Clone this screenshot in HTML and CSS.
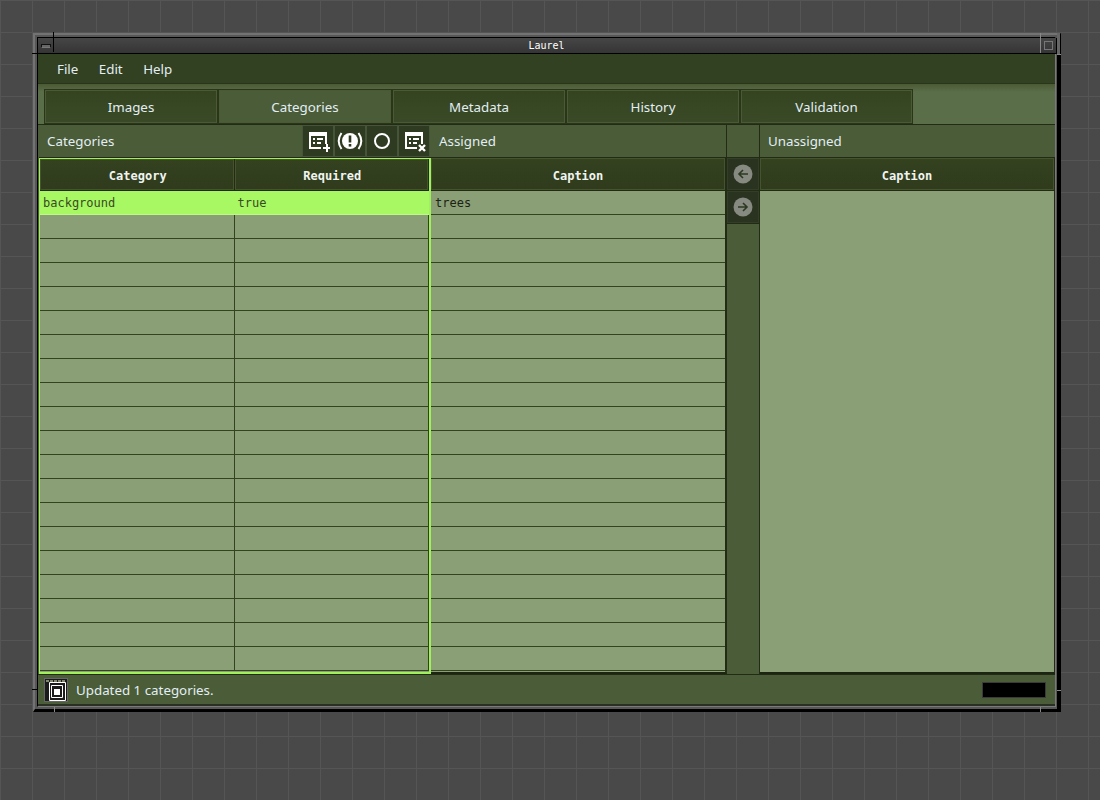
FILE: index.html
```html
<!DOCTYPE html>
<html lang="en">
<head>
    <meta charset="UTF-8">
    <title>Laurel</title>
    <link rel="stylesheet" href="styles.css">
</head>
<body>

<div class="window">
    <div class="frame">
        <div class="titlebar">
            <div class="corner-btn"><span class="minimize"></span></div>
            <div class="title">Laurel</div>
            <div class="corner-btn corner-right"><span class="maximize"></span></div>
        </div>

        <div class="menubar">
            <span>File</span>
            <span>Edit</span>
            <span>Help</span>
        </div>

        <div class="tabs">
            <div class="tab">Images</div>
            <div class="tab active">Categories</div>
            <div class="tab">Metadata</div>
            <div class="tab">History</div>
            <div class="tab">Validation</div>
        </div>

        <div class="panes">
            <div class="pane pane-categories">
                <div class="pane-head">
                    <span class="pane-title">Categories</span>
                    <div class="tool-btn">
                        <svg width="24" height="24" viewBox="0 0 24 24">
                            <path d="M3 3h18v12h-2V7H5v11h10v2H3z" fill="#fff"/>
                            <path d="M7 9h2v2H7zM11 9h6v2h-6zM7 13h2v2H7zM11 13h4v2h-4z" fill="#fff"/>
                            <path d="M20 15h2v3h2v2h-2v3h-2v-3h-3v-2h3z" fill="#fff"/>
                        </svg>
                    </div>
                    <div class="tool-btn">
                        <svg width="26" height="24" viewBox="0 0 26 24">
                            <circle cx="13" cy="12" r="8" fill="#fff"/>
                            <rect x="11.700" y="6.500" width="2.600" height="7" fill="#2f3b20"/>
                            <rect x="11.700" y="15" width="2.600" height="2.600" fill="#2f3b20"/>
                            <path d="M4.500 4C1 9 1 15 4.500 20M21.500 4c3.500 5 3.500 11 0 16" fill="none" stroke="#fff" stroke-width="2"/>
                        </svg>
                    </div>
                    <div class="tool-btn">
                        <svg width="24" height="24" viewBox="0 0 24 24">
                            <circle cx="12" cy="12" r="7" fill="none" stroke="#fff" stroke-width="2"/>
                        </svg>
                    </div>
                    <div class="tool-btn">
                        <svg width="24" height="24" viewBox="0 0 24 24">
                            <path d="M3 3h18v12h-2V7H5v11h10v2H3z" fill="#fff"/>
                            <path d="M7 9h2v2H7zM11 9h6v2h-6zM7 13h2v2H7zM11 13h4v2h-4z" fill="#fff"/>
                            <path d="M17 16l6 6M23 16l-6 6" stroke="#fff" stroke-width="2.400" fill="none"/>
                        </svg>
                    </div>
                </div>
                <div class="table table-focus">
                    <div class="table-head">
                        <div class="cell">Category</div>
                        <div class="cell">Required</div>
                    </div>
                    <div class="row selected"><div class="cell">background</div><div class="cell">true</div></div>
                    <div class="row"><div class="cell"></div><div class="cell"></div></div>
                    <div class="row"><div class="cell"></div><div class="cell"></div></div>
                    <div class="row"><div class="cell"></div><div class="cell"></div></div>
                    <div class="row"><div class="cell"></div><div class="cell"></div></div>
                    <div class="row"><div class="cell"></div><div class="cell"></div></div>
                    <div class="row"><div class="cell"></div><div class="cell"></div></div>
                    <div class="row"><div class="cell"></div><div class="cell"></div></div>
                    <div class="row"><div class="cell"></div><div class="cell"></div></div>
                    <div class="row"><div class="cell"></div><div class="cell"></div></div>
                    <div class="row"><div class="cell"></div><div class="cell"></div></div>
                    <div class="row"><div class="cell"></div><div class="cell"></div></div>
                    <div class="row"><div class="cell"></div><div class="cell"></div></div>
                    <div class="row"><div class="cell"></div><div class="cell"></div></div>
                    <div class="row"><div class="cell"></div><div class="cell"></div></div>
                    <div class="row"><div class="cell"></div><div class="cell"></div></div>
                    <div class="row"><div class="cell"></div><div class="cell"></div></div>
                    <div class="row"><div class="cell"></div><div class="cell"></div></div>
                    <div class="row"><div class="cell"></div><div class="cell"></div></div>
                    <div class="row"><div class="cell"></div><div class="cell"></div></div>
                </div>
            </div>

            <div class="pane pane-assigned">
                <div class="pane-head"><span class="pane-title">Assigned</span></div>
                <div class="table">
                    <div class="table-head"><div class="cell">Caption</div></div>
                    <div class="row"><div class="cell">trees</div></div>
                    <div class="row"><div class="cell"></div></div>
                    <div class="row"><div class="cell"></div></div>
                    <div class="row"><div class="cell"></div></div>
                    <div class="row"><div class="cell"></div></div>
                    <div class="row"><div class="cell"></div></div>
                    <div class="row"><div class="cell"></div></div>
                    <div class="row"><div class="cell"></div></div>
                    <div class="row"><div class="cell"></div></div>
                    <div class="row"><div class="cell"></div></div>
                    <div class="row"><div class="cell"></div></div>
                    <div class="row"><div class="cell"></div></div>
                    <div class="row"><div class="cell"></div></div>
                    <div class="row"><div class="cell"></div></div>
                    <div class="row"><div class="cell"></div></div>
                    <div class="row"><div class="cell"></div></div>
                    <div class="row"><div class="cell"></div></div>
                    <div class="row"><div class="cell"></div></div>
                    <div class="row"><div class="cell"></div></div>
                    <div class="row"><div class="cell"></div></div>
                </div>
            </div>

            <div class="pane pane-arrows">
                <div class="pane-head"></div>
                <div class="arrow-col">
                    <div class="arrow-btn">
                        <svg width="20" height="20" viewBox="0 0 20 20">
                            <circle cx="10" cy="10" r="9.500" fill="#868a80"/>
                            <path d="M15 10H6M10 6l-4 4 4 4" fill="none" stroke="#2c3820" stroke-width="1.600"/>
                        </svg>
                    </div>
                    <div class="arrow-btn">
                        <svg width="20" height="20" viewBox="0 0 20 20">
                            <circle cx="10" cy="10" r="9.500" fill="#868a80"/>
                            <path d="M5 10h9M10 6l4 4-4 4" fill="none" stroke="#2c3820" stroke-width="1.600"/>
                        </svg>
                    </div>
                </div>
            </div>

            <div class="pane pane-unassigned">
                <div class="pane-head"><span class="pane-title">Unassigned</span></div>
                <div class="table">
                    <div class="table-head"><div class="cell">Caption</div></div>
                </div>
            </div>
        </div>

        <div class="statusbar">
            <div class="status-icon">
                <svg width="24" height="24" viewBox="0 0 24 24">
                    <rect x="0.500" y="0.500" width="23" height="23" fill="#1b1b1b" stroke="#666"/>
                    <path d="M2 3h20" stroke="#7f8a70" stroke-width="2" stroke-dasharray="3 1"/>
                    <path d="M5.500 4.500h16v18h-16z" fill="none" stroke="#fff"/>
                    <path d="M7.500 7.500h11v12h-11z" fill="none" stroke="#fff"/>
                    <rect x="10" y="11" width="6" height="6" fill="#fff"/>
                </svg>
            </div>
            <span class="status-text">Updated 1 categories.</span>
            <div class="progress"></div>
        </div>
    </div>

    <span class="notch notch-tr-patch"></span>
    <span class="notch notch-tl-v"></span>
    <span class="notch notch-tl-h"></span>
    <span class="notch notch-tr-v"></span>
    <span class="notch notch-tr-h"></span>
    <span class="notch notch-bl-v"></span>
    <span class="notch notch-bl-h"></span>
    <span class="notch notch-br-v"></span>
    <span class="notch notch-br-h"></span>
</div>

</body>
</html>
```

FILE: styles.css
```css
html, body {
    height: 100%;
}
body {
    margin: 0;
    padding: 33px;
    box-sizing: border-box;
    background-color: #494949;
    background-image:
        linear-gradient(#555 1px, transparent 1px),
        linear-gradient(90deg, #555 1px, transparent 1px);
    background-size: 32px 32px;
    font-family: "Noto Sans", sans-serif;
    font-size: 13.33px;
    color: #e3eef4;
    overflow: hidden;
}

/* window frame */
.window {
    position: relative;
    width: 1028px;
    height: 679px;
    box-sizing: border-box;
    background-color: #575757;
    border-top: 2px solid #737373;
    border-left: 2px solid #737373;
    border-right: 4px solid #000;
    border-bottom: 3px solid #000;
    padding: 2px 1px 2px 2px;
}
.frame {
    height: 100%;
    box-sizing: border-box;
    border-top: 1px solid #000;
    border-left: 1px solid #000;
    border-right: 1px solid #7a7a7a;
    border-bottom: 1px solid #7a7a7a;
    display: flex;
    flex-direction: column;
}

/* resize handle marks, they sit over the frame */
.notch {
    position: absolute;
}
.notch-tr-patch { left: 1022px; top: -2px; width: 3px; height: 21px; background-color: #666; }
.notch-tl-v { left: 18px; top: -3px; width: 1px; height: 20px; background-color: #000; }
.notch-tl-h { left: -3px; top: 18px; width: 21px; height: 1px; background-color: #000; }
.notch-tr-v { left: 1005px; top: -2px; width: 1px; height: 20px; background-color: #888; }
.notch-tr-h { left: 1022px; top: 19px; width: 4px; height: 1px; background-color: #888; }
.notch-bl-v { left: 19px; top: 672px; width: 1px; height: 5px; background-color: #888; }
.notch-bl-h { left: -3px; top: 654px; width: 5px; height: 1px; background-color: #000; }
.notch-br-v { left: 1005px; top: 672px; width: 1px; height: 5px; background-color: #888; }
.notch-br-h { left: 1022px; top: 655px; width: 4px; height: 1px; background-color: #888; }

.titlebar {
    height: 16px;
    flex: none;
    display: flex;
    background: linear-gradient(#464646, #353535);
    border-bottom: 1px solid #000;
    border-right: 1px solid #000;
    margin-right: -2px;
    box-sizing: border-box;
}
.corner-btn {
    width: 15px;
    flex: none;
    display: flex;
    align-items: center;
    justify-content: center;
}
.corner-right {
    width: 16px;
}
.minimize {
    width: 10px;
    height: 4px;
    box-sizing: border-box;
    border: 1px solid #111;
    border-bottom-color: #777;
    background-color: #666;
}
.maximize {
    width: 9px;
    height: 9px;
    box-sizing: border-box;
    border: 1px solid #777;
}
.title {
    flex: 1;
    text-align: center;
    font-family: "DejaVu Sans Mono", monospace;
    font-size: 10px;
    line-height: 15px;
    color: #fff;
}

.menubar {
    height: 30px;
    flex: none;
    display: flex;
    align-items: center;
    gap: 20.5px;
    padding-left: 19px;
    background-color: #324122;
    border-bottom: 1px solid #2a3519;
    box-sizing: border-box;
}

.tabs {
    height: 40px;
    flex: none;
    display: flex;
    align-items: flex-end;
    padding-left: 6px;
    background: linear-gradient(#4a5a35, #5b6e4a 8px);
}
.tab {
    width: 172px;
    height: 33px;
    flex: none;
    text-align: center;
    line-height: 35px;
    background: linear-gradient(#35441f, #3a4a28);
    border: 1px solid #2a3519;
    box-shadow: inset 0 0 0 1px #4a5a35;
}
.tab:last-child {
    width: 171px;
}
.tab.active {
    background-color: #4a5c38;
    background-image: none;
}

.panes {
    flex: 1;
    min-height: 0;
    display: flex;
    background-color: #4a5c38;
    border-top: 1px solid #222c15;
    padding-left: 1px;
}
.pane {
    display: flex;
    flex-direction: column;
    flex: none;
}
.pane-categories { width: 392px; }
.pane-assigned { width: 296px; }
.pane-arrows { width: 33px; }
.pane-unassigned { width: 295px; }

.pane-head {
    height: 33px;
    flex: none;
    display: flex;
    align-items: center;
    box-sizing: border-box;
    background-color: #4a5c38;
    border-bottom: 1px solid #222c15;
}
.pane-assigned .pane-head {
    border-right: 1px solid #222c15;
}
.pane-title {
    flex: 1;
    padding-left: 8px;
}
.pane-categories .pane-head {
    padding-right: 1px;
}
.pane-arrows .pane-head {
    border-right: 1px solid #222c15;
}
.tool-btn {
    width: 32px;
    height: 32px;
    flex: none;
    display: flex;
    align-items: center;
    justify-content: center;
    background-color: #2f3b20;
    box-shadow: inset 0 0 0 1px #46553a;
}

.table {
    flex: 1;
    min-height: 0;
    box-sizing: border-box;
    background-color: #8a9f76;
    font-family: "DejaVu Sans Mono", monospace;
    font-size: 12px;
    border-right: 2px solid #222c15;
    border-bottom: 2px solid #1c2412;
}
.pane-unassigned .table {
    border-right-width: 1px;
}
.table-focus {
    border: 1px solid #a0f05c;
    border-right-width: 2px;
    border-bottom-width: 2px;
}
.table-head {
    height: 33px;
    display: flex;
    box-sizing: border-box;
    background: linear-gradient(#344220, #2f3b1c);
    border-bottom: 1px solid #222c15;
    font-weight: bold;
    color: #f0f4f0;
}
.table-focus .table-head {
    height: 32px;
}
.table-head .cell {
    flex: 1;
    text-align: center;
    line-height: 37px;
    height: 100%;
    overflow: hidden;
    box-shadow: inset 0 0 0 1px #45542f;
}
.table-focus .table-head .cell {
    line-height: 35px;
    padding-left: 2px;
    border-right: 1px solid #222c15;
    box-sizing: border-box;
}
.row {
    height: 24px;
    display: flex;
    box-sizing: border-box;
    border-bottom: 1px solid #33421f;
    color: #1c2414;
}
.row .cell {
    flex: 1;
    line-height: 25px;
    padding-left: 3px;
    overflow: hidden;
}
.table-focus .row .cell {
    border-right: 1px solid #33421f;
}
.pane-assigned .row .cell {
    padding-left: 4px;
}
.row.selected {
    background-color: #a8f864;
    color: #3a4a22;
    border-bottom-color: #bdfa85;
}
.table-focus .row.selected .cell {
    border-right-color: #a8f864;
}

.arrow-col {
    flex: 1;
    display: flex;
    flex-direction: column;
    border-right: 1px solid #222c15;
    background-color: #4a5c38;
}
.arrow-btn {
    height: 33px;
    flex: none;
    box-sizing: border-box;
    display: flex;
    align-items: center;
    justify-content: center;
    background-color: #2a3320;
    border-bottom: 1px solid #222c15;
    box-shadow: inset 0 0 0 1px #333d28;
}

.statusbar {
    height: 32px;
    flex: none;
    display: flex;
    align-items: center;
    padding: 0 9px 0 6px;
    background-color: #4a5c38;
    border-top: 1px solid #222c15;
    border-bottom: 2px solid #2a2f24;
    box-sizing: border-box;
}
.status-icon {
    width: 24px;
    height: 24px;
    flex: none;
    margin-right: 8px;
}
.status-icon svg {
    display: block;
}
.status-text {
    flex: 1;
}
.progress {
    width: 64px;
    height: 16px;
    background-color: #000;
    border: 1px solid #3a3a3a;
    box-sizing: border-box;
}
```
